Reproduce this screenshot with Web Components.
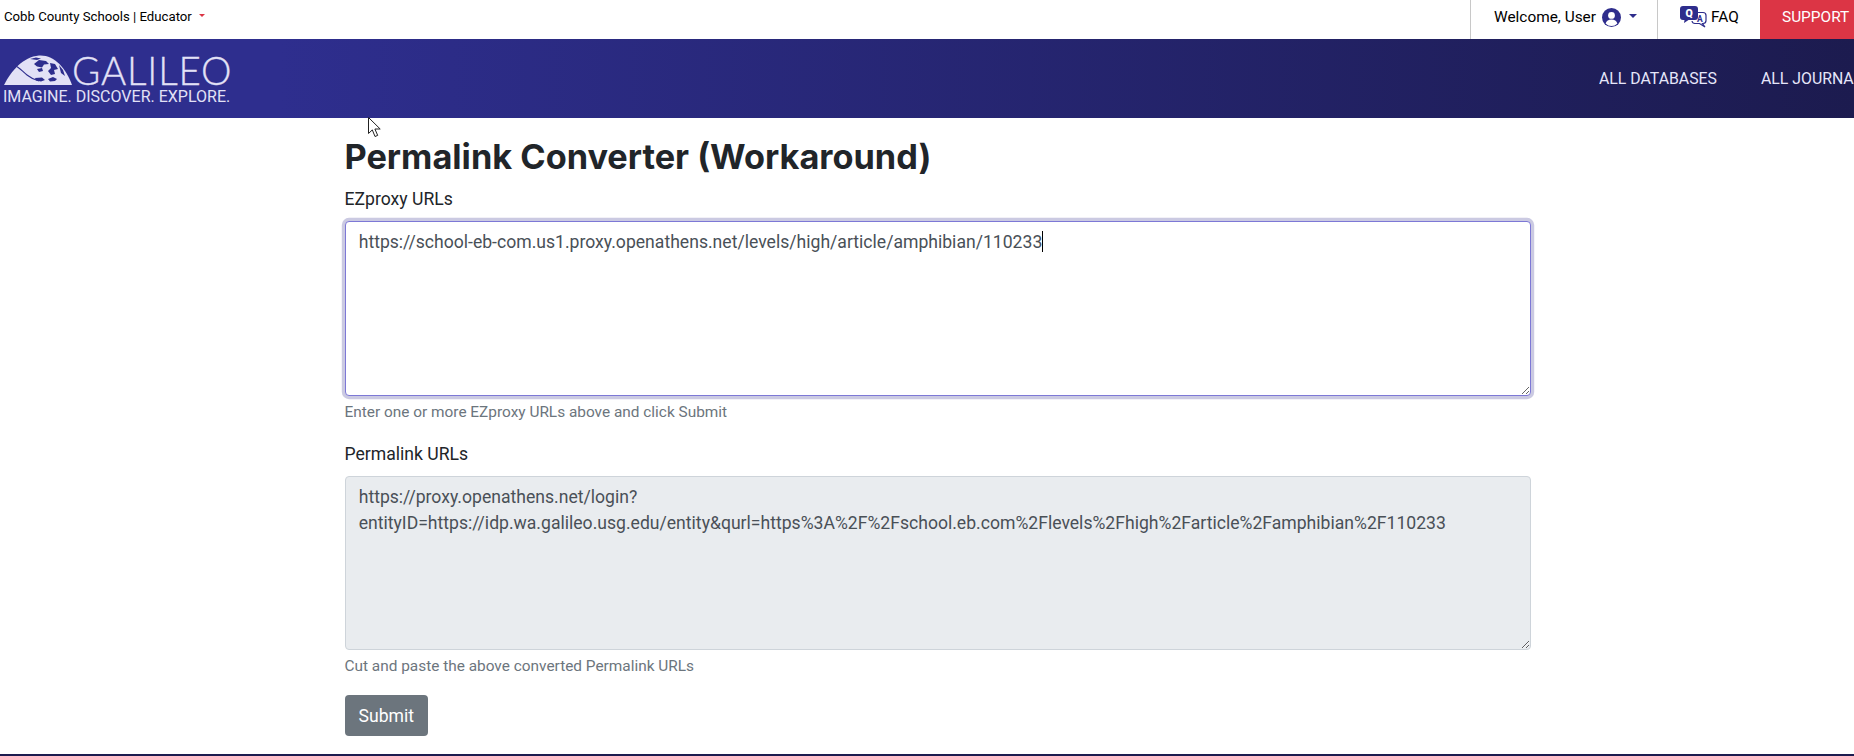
<!DOCTYPE html>
<html lang="en">
<head>
<meta charset="utf-8">
<title>Permalink Converter (Workaround)</title>
<style>
  html, body { margin: 0; height: 100%; overflow: hidden; background: #fff; }
  body { display: flex; flex-direction: column; font-family: Roboto, "Liberation Sans", sans-serif; font-size: 17.6px; color: #212529; position: relative; }
</style>
</head>
<body>
<gal-topbar></gal-topbar>
<gal-header></gal-header>
<gal-converter></gal-converter>
<gal-cursor></gal-cursor>

<template id="topbar-template">
  <style>
    :host { display: flex; height: 39px; flex: none; align-items: stretch; justify-content: space-between; background: #fff; color: #000; }
    .site { display: flex; align-items: center; padding: 0 0 6px 4px; font-size: 13.2px; gap: 7px; }
    .caret { width: 0; height: 0; border: 4px solid transparent; border-bottom: 0; border-top-color: currentColor; }
    .site .caret { border-width: 3px 3px 0; color: #dc3545; margin-top: -2px; }
    .links { display: flex; align-items: stretch; font-size: 15.4px; }
    .link { display: flex; align-items: center; border-left: 1px solid #c8c8c8; padding: 0 0 5px 22px; box-sizing: border-box; }
    .welcome { width: 187px; padding-left: 23px; gap: 6px; }
    .welcome .caret { color: #2e2d8c; margin-left: 2px; margin-top: -3px; }
    .faq { width: 103px; gap: 4px; }
    .support { width: 94px; padding: 0 0 5px 22px; box-sizing: border-box; display: flex; align-items: center; background: #dc3545; color: #fff; white-space: nowrap; overflow: hidden; }
    svg { display: block; flex: none; }
  </style>
  <div class="site"><span>Cobb County Schools | Educator</span><span class="caret"></span></div>
  <div class="links">
    <div class="link welcome">
      <span>Welcome, User</span>
      <svg width="19" height="19" viewBox="0 0 19 19">
        <circle cx="9.5" cy="9.5" r="9.5" fill="#2e2d8c"/>
        <circle cx="9.5" cy="7.4" r="3.4" fill="#fff"/>
        <path d="M3.6 15.4c.8-2.6 2.9-4 5.9-4s5.1 1.4 5.9 4a8 8 0 0 1-11.8 0z" fill="#fff"/>
      </svg>
      <span class="caret"></span>
    </div>
    <div class="link faq">
      <svg width="27" height="22" viewBox="0 0 27 22">
        <path d="M17.5 6.500H23a3 3 0 0 1 3 3v5a3 3 0 0 1-3 3h-.5l2.500 3.500-5.500-3.500H15a3 3 0 0 1-3-2.500" fill="none" stroke="#2e2d8c" stroke-width="1.200"/>
        <path d="M3 0h12a3 3 0 0 1 3 3v8a3 3 0 0 1-3 3H8.500L4 17l.5-3H3a3 3 0 0 1-3-3V3a3 3 0 0 1 3-3z" fill="#2e2d8c"/>
        <text x="9" y="10.800" text-anchor="middle" font-family="Roboto, sans-serif" font-size="10.500" font-weight="900" fill="#fff">Q</text>
        <text x="19.800" y="15.500" text-anchor="middle" font-family="Roboto, sans-serif" font-size="8.500" font-weight="700" fill="#2e2d8c">A</text>
      </svg>
      <span>FAQ</span>
    </div>
    <div class="support">SUPPORT</div>
  </div>
</template>

<template id="header-template">
  <style>
    :host { display: flex; height: 79px; flex: none; justify-content: space-between; align-items: center; background: linear-gradient(90deg, #2e2e8e 0%, #2e2e8e 15%, #1c1b4f 100%); overflow: hidden; }
    .logo { padding: 4px 0 0 4px; color: #e2e1f6; flex: none; }
    .mark { display: flex; align-items: flex-end; height: 30px; }
    .name { font-family: Lato, sans-serif; font-weight: 300; font-size: 38.500px; line-height: 30px; letter-spacing: .8px; -webkit-text-stroke: .3px currentColor; }
    .tag { font-size: 16px; font-weight: 400; line-height: 20px; margin: 2px 0 0 -1px; white-space: nowrap; }
    nav { display: flex; flex: none; gap: 44px; width: 255px; font-size: 15.840px; color: #e6e6fa; white-space: nowrap; overflow: hidden; }
    svg { display: block; flex: none; }
  </style>
  <div class="logo">
    <div class="mark">
      <svg width="68" height="30" viewBox="0 0 68 30">
        <path fill="#e2e1f6" d="M0 30C7 16 19 2 35 .5 50-.5 62 13 68 30z"/>
        <path fill="none" stroke="#2e2e8e" stroke-width="1.100" d="M10 10c5 2 8 6 13 10s8 5 12 6"/>
        <path fill="#2e2e8e" d="M26 4l6-1.500 5 1-4 1.500zM30 9l5-4 7 1 3 3-5 .5-2 3-5-1zM33 14l5-1 1 3-4 1zM31 23l7-.5 3 2.500-4 1.500-5-1zM46 8l5 1 3 5-4 1 1 4-4 1-3-4 3-3zM44 24l5-2 4 2-2 2-5 .5zM55 10l4 5 2 6-4-3z"/>
      </svg>
      <span class="name">GALILEO</span>
    </div>
    <div class="tag">IMAGINE. DISCOVER. EXPLORE.</div>
  </div>
  <nav><span>ALL DATABASES</span><span>ALL JOURNALS</span></nav>
</template>

<template id="field-template">
  <style>
    :host { display: block; margin-bottom: 16px; }
    label { display: block; line-height: 26.4px; margin-bottom: 9px; color: #212529; }
    .box { display: block; box-sizing: border-box; height: 175px; padding: 6.600px 13.200px; border: 1px solid #ced4da; border-radius: 4px; line-height: 26.4px; color: #495057; overflow: auto; resize: vertical; background: #fff; }
    :host([focused]) .box { border-color: #7d78d6; box-shadow: 0 0 0 3.200px rgba(46, 45, 140, .25); }
    :host([disabled]) .box { background: #e9ecef; height: 174px; }
    .caret { display: none; width: 1px; height: 21px; background: #000; vertical-align: text-bottom; }
    :host([focused]) .caret { display: inline-block; }
    small { display: block; margin-top: 5px; font-size: 15.4px; line-height: 23.1px; color: #6c757d; }
  </style>
  <label></label>
  <div class="box" role="textbox"><slot></slot><span class="caret"></span></div>
  <small></small>
</template>

<script>
class GalTopbar extends HTMLElement {
  connectedCallback() {
    this.attachShadow({ mode: 'open' });
    this.shadowRoot.appendChild(document.getElementById('topbar-template').content.cloneNode(true));
  }
}

class GalHeader extends HTMLElement {
  connectedCallback() {
    this.attachShadow({ mode: 'open' });
    this.shadowRoot.appendChild(document.getElementById('header-template').content.cloneNode(true));
  }
}

class GalField extends HTMLElement {
  connectedCallback() {
    this.attachShadow({ mode: 'open' });
    this.shadowRoot.appendChild(document.getElementById('field-template').content.cloneNode(true));
    this.shadowRoot.querySelector('label').textContent = this.getAttribute('label') || '';
    this.shadowRoot.querySelector('small').textContent = this.getAttribute('help') || '';
  }
}

class GalButton extends HTMLElement {
  connectedCallback() {
    this.attachShadow({ mode: 'open' }).innerHTML = `
      <style>
        :host { display: inline-block; }
        button { font: inherit; line-height: 24px; height: 41px; padding: 0 14px; color: #fff; background: #6c757d; border: 0; border-radius: 4px; }
      </style>
      <button><slot></slot></button>`;
  }
}

class GalConverter extends HTMLElement {
  connectedCallback() {
    this.attachShadow({ mode: 'open' }).innerHTML = `
      <style>
        :host { display: flex; flex-direction: column; flex: 1; min-height: 0; padding: 0 323.500px 0 344.500px; border-bottom: 2px solid #1c1b4f; }
        h1 { margin: 19px 0 9px; font-family: Inter, Lato, sans-serif; font-size: 34.3px; line-height: 40px; font-weight: 700; color: #212529; }
        .actions { margin-top: 1px; }
      </style>
      <h1>Permalink Converter (Workaround)</h1>
      <gal-field label="EZproxy URLs" help="Enter one or more EZproxy URLs above and click Submit" focused>https://school-eb-com.us1.proxy.openathens.net/levels/high/article/amphibian/110233</gal-field>
      <gal-field label="Permalink URLs" help="Cut and paste the above converted Permalink URLs" disabled>https://proxy.openathens.net/login?entityID=https://idp.wa.galileo.usg.edu/entity&amp;qurl=https%3A%2F%2Fschool.eb.com%2Flevels%2Fhigh%2Farticle%2Famphibian%2F110233</gal-field>
      <div class="actions"><gal-button>Submit</gal-button></div>`;
  }
}

class GalCursor extends HTMLElement {
  connectedCallback() {
    this.attachShadow({ mode: 'open' }).innerHTML = `
      <style>
        :host { position: absolute; left: 368px; top: 117px; width: 13px; height: 21px; }
        svg { display: block; }
      </style>
      <svg width="13" height="21" viewBox="0 0 13 21"><path d="M.5.5v16l3.800-3.600 2.700 6.600 2.700-1.100-2.800-6.400h5.300z" fill="#fff" stroke="#222" stroke-width="1"/></svg>`;
  }
}

customElements.define('gal-topbar', GalTopbar);
customElements.define('gal-header', GalHeader);
customElements.define('gal-field', GalField);
customElements.define('gal-button', GalButton);
customElements.define('gal-converter', GalConverter);
customElements.define('gal-cursor', GalCursor);
</script>
</body>
</html>
